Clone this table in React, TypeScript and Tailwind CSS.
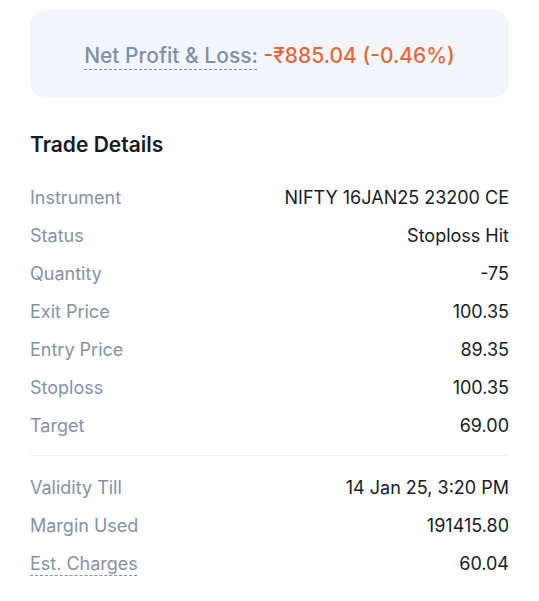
import React from "react";

type Row = { label: string; value: string; dashed?: boolean };

const mainRows: Row[] = [
  { label: "Instrument", value: "NIFTY 16JAN25 23200 CE" },
  { label: "Status", value: "Stoploss Hit" },
  { label: "Quantity", value: "-75" },
  { label: "Exit Price", value: "100.35" },
  { label: "Entry Price", value: "89.35" },
  { label: "Stoploss", value: "100.35" },
  { label: "Target", value: "69.00" },
];

const extraRows: Row[] = [
  { label: "Validity Till", value: "14 Jan 25, 3:20 PM" },
  { label: "Margin Used", value: "191415.80" },
  { label: "Est. Charges", value: "60.04", dashed: true },
];

const DetailRow = ({ label, value, dashed }: Row) => (
  <div className="flex h-[38px] items-center justify-between">
    <span
      className={
        dashed
          ? "text-[18px] leading-[24px] text-[#8592a6] underline decoration-dashed decoration-[#8592a6] decoration-1 underline-offset-[5px]"
          : "text-[18px] leading-[24px] text-[#8592a6]"
      }
    >
      {label}
    </span>
    <span className="text-[18px] leading-[24px] text-[#181b26]">{value}</span>
  </div>
);

export default function App() {
  return (
    <div
      className="min-h-[601px] w-[539px] bg-white px-[30px] pt-[10px]"
      style={{ fontFamily: "Inter, 'Noto Sans', sans-serif" }}
    >
      {/* P&L card */}
      <div className="flex h-[88px] items-center justify-center rounded-[16px] bg-[#f2f5f9] pt-[3px]">
        <p className="text-[21px] leading-[28px] font-medium">
          <span className="text-[#7f90a9] underline decoration-dashed decoration-[#7f90a9] decoration-1 underline-offset-[6px]">
            Net Profit &amp; Loss:
          </span>{" "}
          <span className="text-[#e5683b]">-₹885.04 (-0.46%)</span>
        </p>
      </div>

      {/* Trade details */}
      <h2 className="mt-[33px] text-[21px] leading-[28px] font-semibold text-[#161a26]">
        Trade Details
      </h2>

      <div className="mt-[20px]">
        {mainRows.map((r) => (
          <DetailRow key={r.label} {...r} />
        ))}
      </div>

      <div className="mt-[10px] mb-[13px] h-px bg-[#edf0f3]" />

      <div>
        {extraRows.map((r) => (
          <DetailRow key={r.label} {...r} />
        ))}
      </div>
    </div>
  );
}
